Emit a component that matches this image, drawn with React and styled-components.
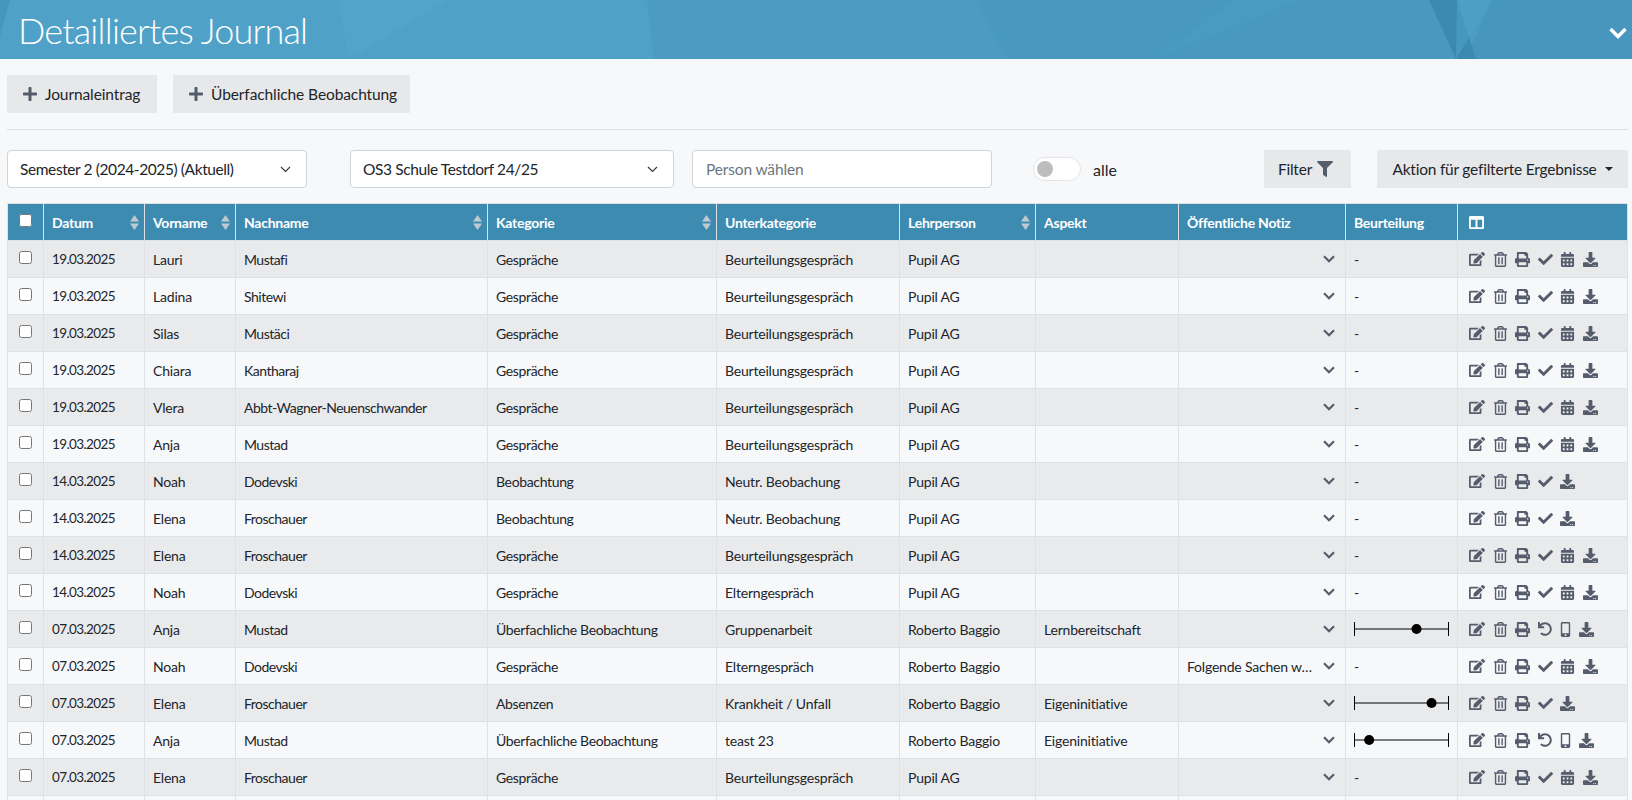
import React from "react";
import styled, { createGlobalStyle } from "styled-components";
import {
  FaPlus,
  FaFilter,
  FaColumns,
  FaEdit,
  FaRegTrashAlt,
  FaPrint,
  FaCheck,
  FaCalendarAlt,
  FaDownload,
  FaUndo,
  FaMobileAlt,
} from "react-icons/fa";

const GlobalStyle = createGlobalStyle`
  html, body {
    margin: 0;
    height: 100%;
    overflow: hidden;
    background: #f7f8fa;
    color: #212529;
    font-family: "Lato", "Noto Sans", sans-serif;
  }
`;

const Banner = styled.header`
  position: relative;
  height: 59px;
  display: flex;
  align-items: center;
  justify-content: space-between;
  padding: 0 5px 0 18px;
  background: #50a1c7;
  overflow: hidden;
`;

const BannerArt = styled.svg`
  position: absolute;
  inset: 0;
  width: 100%;
  height: 100%;
`;

const Title = styled.h1`
  position: relative;
  margin: 0;
  font-size: 36px;
  font-weight: 300;
  letter-spacing: -0.8px;
  color: #fff;
`;

const BannerToggle = styled.span`
  position: relative;
  display: flex;
  margin-top: 7px;
`;

const Main = styled.main`
  padding: 16px 4px 0 7px;
`;

const ButtonRow = styled.div`
  display: flex;
  gap: 16px;
  padding-bottom: 16px;
  border-bottom: 1px solid #dcdfe2;
`;

const Button = styled.button`
  display: flex;
  align-items: center;
  gap: 8px;
  height: 38px;
  padding: 0 13px;
  border: 0;
  background: #e7e8ea;
  color: #212529;
  font: inherit;
  font-size: 15.5px;
  letter-spacing: -0.22px;
  white-space: nowrap;
  svg {
    color: #555c6b;
  }
`;

const AddButton = styled(Button)`
  box-sizing: border-box;
  width: ${(p) => p.$width}px;
  padding: 0 0 0 15px;
  gap: 7px;
  letter-spacing: -0.1px;
`;

const FilterRow = styled.div`
  display: flex;
  align-items: center;
  margin-top: 20px;
`;

const Select = styled.div`
  display: flex;
  align-items: center;
  justify-content: space-between;
  box-sizing: border-box;
  width: ${(p) => p.$width}px;
  height: 38px;
  margin-right: ${(p) => p.$gap}px;
  padding: 0 15px 0 12px;
  background: #fff;
  border: 1px solid #ced4da;
  border-radius: 4px;
  font-size: 15.5px;
  letter-spacing: -0.4px;
`;

const PersonInput = styled.input`
  box-sizing: border-box;
  width: 300px;
  height: 38px;
  padding: 0 13px;
  background: #fff;
  border: 1px solid #ced4da;
  border-radius: 4px;
  font: inherit;
  font-size: 15.5px;
  letter-spacing: -0.15px;
  &::placeholder {
    color: #6c757d;
    opacity: 1;
  }
`;

const Toggle = styled.span`
  display: flex;
  align-items: center;
  box-sizing: border-box;
  width: 48px;
  height: 24px;
  margin-left: 41px;
  padding-left: 3px;
  background: #fff;
  border: 1px solid #e2e4e8;
  border-radius: 12px;
  &::before {
    content: "";
    width: 16px;
    height: 16px;
    border-radius: 50%;
    background: #bdbdbd;
  }
`;

const ToggleLabel = styled.span`
  margin-left: 12px;
  font-size: 16px;
`;

const FilterButton = styled(Button)`
  margin-left: auto;
  width: 87px;
  padding: 0 17px 0 13px;
  justify-content: center;
  gap: 5px;
`;

const ActionButton = styled(Button)`
  margin-left: 26px;
  width: 251px;
  justify-content: center;
  &::after {
    content: "";
    border-top: 4.5px solid #212529;
    border-left: 4.5px solid transparent;
    border-right: 4.5px solid transparent;
  }
`;

const Table = styled.table`
  width: 1620px;
  margin-top: 15px;
  table-layout: fixed;
  border-collapse: collapse;
  font-size: 14px;
  letter-spacing: -0.2px;
`;

const Th = styled.th`
  height: 37px;
  box-sizing: border-box;
  padding: 0 8px;
  background: #3e8bb2;
  border: 1px solid #dee2e6;
  color: #fff;
  font-weight: 700;
  letter-spacing: -0.25px;
  text-align: left;
`;

const ThInner = styled.div`
  display: flex;
  align-items: center;
  justify-content: space-between;
  margin-right: -3px;
`;

const Row = styled.tr`
  background: ${(p) => (p.$striped ? "#e9eaec" : "#f7f8fa")};
`;

const Td = styled.td`
  height: 37px;
  box-sizing: border-box;
  padding: 0 8px;
  border: 1px solid #dee2e6;
  white-space: nowrap;
`;

const DateCell = styled(Td)`
  font-size: 13.5px;
  letter-spacing: -0.6px;
`;

const NameCell = styled(Td)`
  letter-spacing: -0.5px;
`;

const CategoryCell = styled(Td)`
  letter-spacing: -0.35px;
`;

const CheckCell = styled.div`
  display: flex;
  justify-content: center;
  margin-top: -3px;
`;

const Check = styled.input`
  width: 13px;
  height: 13px;
  margin: 0;
`;

const NoteCell = styled.div`
  display: flex;
  align-items: center;
  justify-content: space-between;
`;

const RowChevron = styled.svg`
  margin-left: auto;
  margin-right: 2px;
`;

const ScaleSvg = styled.svg`
  display: block;
`;

const Actions = styled.div`
  display: flex;
  align-items: center;
  gap: 7.5px;
  padding-left: 3px;
  color: #555c6b;
`;

const MobileIcon = styled(FaMobileAlt)`
  margin: 0 -2px 0 -1px;
`;

const SortIcon = () => (
  <svg width="9" height="15" viewBox="0 0 9 15" fill="#bfc9d0">
    <path d="M4.5 0 9 6.5H0Z" />
    <path d="M0 8.5h9L4.5 15Z" />
  </svg>
);

const SelectArrow = () => (
  <svg width="11" height="7" viewBox="0 0 11 7" fill="none" stroke="#343a40" strokeWidth="1.2">
    <path d="M1 1l4.5 4.5L10 1" />
  </svg>
);

const Chevron = () => (
  <RowChevron width="12" height="8" viewBox="0 0 12 8" fill="none" stroke="#555c6b" strokeWidth="2.2">
    <path d="M1 1.2l5 5 5-5" />
  </RowChevron>
);

const BannerChevron = () => (
  <svg width="18" height="12" viewBox="0 0 18 12" fill="none" stroke="#fff" strokeWidth="3.4">
    <path d="M1.5 2l7.5 7.5L16.500 2" />
  </svg>
);

const Scale = ({ value }) => (
  <ScaleSvg width="95" height="14" viewBox="0 0 95 14">
    <path d="M.5 0v14M94.5 0v14M.5 7h94" stroke="#000" fill="none" />
    <circle cx={value * 94 + 0.5} cy="7" r="5" fill="#000" />
  </ScaleSvg>
);

const columns = [
  { label: "Datum", sort: true, width: 101 },
  { label: "Vorname", sort: true, width: 91 },
  { label: "Nachname", sort: true, width: 252 },
  { label: "Kategorie", sort: true, width: 229 },
  { label: "Unterkategorie", width: 183 },
  { label: "Lehrperson", sort: true, width: 136 },
  { label: "Aspekt", width: 143 },
  { label: "Öffentliche Notiz", width: 167 },
  { label: "Beurteilung", width: 112 },
];

const talk = "Gespräche";
const review = "Beurteilungsgespräch";
const watch = "Beobachtung";
const neutral = "Neutr. Beobachung";
const cross = "Überfachliche Beobachtung";

const rows = [
  ["19.03.2025", "Lauri", "Mustafi", talk, review, "Pupil AG"],
  ["19.03.2025", "Ladina", "Shitewi", talk, review, "Pupil AG"],
  ["19.03.2025", "Silas", "Mustäci", talk, review, "Pupil AG"],
  ["19.03.2025", "Chiara", "Kantharaj", talk, review, "Pupil AG"],
  ["19.03.2025", "Vlera", "Abbt-Wagner-Neuenschwander", talk, review, "Pupil AG"],
  ["19.03.2025", "Anja", "Mustad", talk, review, "Pupil AG"],
  ["14.03.2025", "Noah", "Dodevski", watch, neutral, "Pupil AG", "", "", null, "short"],
  ["14.03.2025", "Elena", "Froschauer", watch, neutral, "Pupil AG", "", "", null, "short"],
  ["14.03.2025", "Elena", "Froschauer", talk, review, "Pupil AG"],
  ["14.03.2025", "Noah", "Dodevski", talk, "Elterngespräch", "Pupil AG"],
  ["07.03.2025", "Anja", "Mustad", cross, "Gruppenarbeit", "Roberto Baggio", "Lernbereitschaft", "", 0.66, "undo"],
  ["07.03.2025", "Noah", "Dodevski", talk, "Elterngespräch", "Roberto Baggio", "", "Folgende Sachen w…"],
  ["07.03.2025", "Elena", "Froschauer", "Absenzen", "Krankheit / Unfall", "Roberto Baggio", "Eigeninitiative", "", 0.82, "short"],
  ["07.03.2025", "Anja", "Mustad", cross, "teast 23", "Roberto Baggio", "Eigeninitiative", "", 0.156, "undo"],
  ["07.03.2025", "Elena", "Froschauer", talk, review, "Pupil AG"],
];

const RowActions = ({ kind }) => (
  <Actions>
    <FaEdit size={16} />
    <FaRegTrashAlt size={15} />
    <FaPrint size={15} />
    {kind === "undo" ? <FaUndo size={14} /> : <FaCheck size={15} />}
    {kind === "undo" && <MobileIcon size={15} />}
    {!kind && <FaCalendarAlt size={15} />}
    <FaDownload size={15} />
  </Actions>
);

const App = () => (
  <>
    <GlobalStyle />
    <Banner>
      <BannerArt viewBox="0 0 1632 59" preserveAspectRatio="none">
        <polygon points="0,0 10,0 0,36" fill="#3e8bb2" opacity="0.5" />
        <polygon points="338,0 448,0 349,59" fill="#5aaacf" opacity="0.35" />
        <polygon points="647,0 1632,0 1632,59 654,59" fill="#4798bf" opacity="0.6" />
        <polygon points="977,0 1429,0 1456,59 1006,59" fill="#3e8bb2" opacity="0.2" />
        <polygon points="1233,0 1300,0 1154,59" fill="#4b9fc6" opacity="0.4" />
        <polygon points="1429,0 1457,0 1476,59 1456,59" fill="#3886ad" opacity="0.8" />
        <polygon points="1457,0 1492,0 1456,59" fill="#4fa2c8" opacity="0.6" />
        <polygon points="1492,0 1632,0 1632,59 1466,59" fill="#3e8bb2" opacity="0.3" />
      </BannerArt>
      <Title>Detailliertes Journal</Title>
      <BannerToggle>
        <BannerChevron />
      </BannerToggle>
    </Banner>
    <Main>
      <ButtonRow>
        <AddButton $width={150}>
          <FaPlus size={16} />
          Journaleintrag
        </AddButton>
        <AddButton $width={237}>
          <FaPlus size={16} />
          Überfachliche Beobachtung
        </AddButton>
      </ButtonRow>
      <FilterRow>
        <Select $width={300} $gap={43}>
          Semester 2 (2024-2025) (Aktuell)
          <SelectArrow />
        </Select>
        <Select $width={324} $gap={18}>
          OS3 Schule Testdorf 24/25
          <SelectArrow />
        </Select>
        <PersonInput placeholder="Person wählen" />
        <Toggle />
        <ToggleLabel>alle</ToggleLabel>
        <FilterButton>
          Filter
          <FaFilter size={16} />
        </FilterButton>
        <ActionButton>Aktion für gefilterte Ergebnisse</ActionButton>
      </FilterRow>
      <Table>
        <colgroup>
          <col width={36} />
          {columns.map((c) => (
            <col key={c.label} width={c.width} />
          ))}
          <col width={170} />
        </colgroup>
        <thead>
          <tr>
            <Th>
              <CheckCell>
                <Check type="checkbox" />
              </CheckCell>
            </Th>
            {columns.map((c) => (
              <Th key={c.label}>
                <ThInner>
                  {c.label}
                  {c.sort && <SortIcon />}
                </ThInner>
              </Th>
            ))}
            <Th>
              <Actions>
                <FaColumns size={15} color="#fff" />
              </Actions>
            </Th>
          </tr>
        </thead>
        <tbody>
          {rows.map((r, i) => (
            <Row key={i} $striped={i % 2 === 0}>
              <Td>
                <CheckCell>
                  <Check type="checkbox" />
                </CheckCell>
              </Td>
              <DateCell>{r[0]}</DateCell>
              <Td>{r[1]}</Td>
              <NameCell>{r[2]}</NameCell>
              <CategoryCell>{r[3]}</CategoryCell>
              <Td>{r[4]}</Td>
              <Td>{r[5]}</Td>
              <Td>{r[6]}</Td>
              <Td>
                <NoteCell>
                  {r[7] && <span>{r[7]}</span>}
                  <Chevron />
                </NoteCell>
              </Td>
              <Td>{r[8] != null ? <Scale value={r[8]} /> : "-"}</Td>
              <Td>
                <RowActions kind={r[9]} />
              </Td>
            </Row>
          ))}
          <Row>
            {Array.from({ length: 11 }, (_, i) => (
              <Td key={i} />
            ))}
          </Row>
        </tbody>
      </Table>
    </Main>
  </>
);

export default App;
